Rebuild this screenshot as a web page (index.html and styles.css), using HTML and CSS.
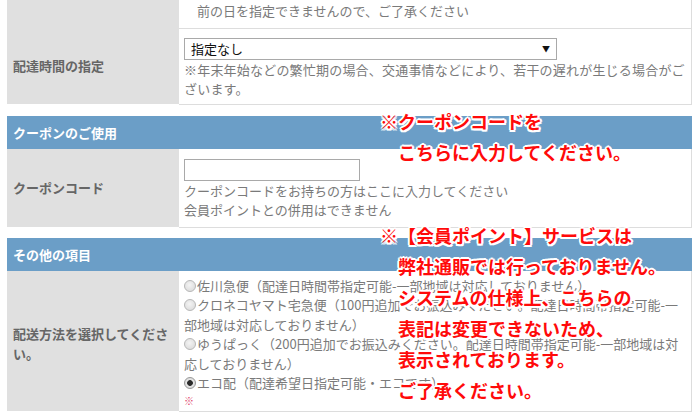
FILE: index.html
```html
<!DOCTYPE html>
<html lang="ja">
<head>
<meta charset="utf-8">
<link rel="stylesheet" href="styles.css">
</head>
<body>
<div class="page">
  <table class="form">
    <tr class="row-top">
      <th></th>
      <td><p class="indent">前の日を指定できませんので、ご了承ください</p></td>
    </tr>
    <tr class="row-time">
      <th>配達時間の指定</th>
      <td>
        <div class="select"><span>指定なし</span><span class="arrow">▼</span></div>
        <p class="wide">※年末年始などの繁忙期の場合、交通事情などにより、若干の遅れが生じる場合がご<br>ざいます。</p>
      </td>
    </tr>
  </table>

  <div class="sec-head">クーポンのご使用</div>
  <table class="form">
    <tr class="row-coupon">
      <th>クーポンコード</th>
      <td>
        <input class="coupon" type="text">
        <p>クーポンコードをお持ちの方はここに入力してください<br>会員ポイントとの併用はできません</p>
      </td>
    </tr>
  </table>

  <div class="sec-head sec-head-2">その他の項目</div>
  <table class="form">
    <tr class="row-ship">
      <th>配送方法を選択してくださ<br>い。</th>
      <td>
        <p><span class="radio"></span>佐川急便（配達日時間帯指定可能-一部地域は対応しておりません）<br><span class="radio"></span>クロネコヤマト宅急便（100円追加でお振込みください。配達日時間帯指定可能-一<br>部地域は対応しておりません）<br><span class="radio"></span>ゆうぱっく（200円追加でお振込みください。配達日時間帯指定可能-一部地域は対<br>応しておりません）<br><span class="radio checked"></span>エコ配（配達希望日指定可能・エコです）</p>
        <p class="req">※</p>
      </td>
    </tr>
  </table>

  <div class="annot annot-1">
    <span class="line">※クーポンコードを</span>
    <span class="line ind">こちらに入力してください。</span>
  </div>
  <div class="annot annot-2">
    <span class="line">※【会員ポイント】サービスは</span>
    <span class="line ind">弊社通販では行っておりません。</span>
    <span class="line ind">システムの仕様上、こちらの</span>
    <span class="line ind">表記は変更できないため、</span>
    <span class="line ind">表示されております。</span>
    <span class="line ind">ご了承ください。</span>
  </div>
</div>
</body>
</html>
```

FILE: styles.css
```css
body {
  margin: 0;
  background: #ffffff;
  font-family: "Noto Sans CJK JP", "Noto Sans", sans-serif;
  font-size: 13px;
  line-height: 19.5px;
  color: #7a7a7a;
}

p {
  margin: 0;
}

.page {
  position: relative;
  padding: 0 4px 0 7px;
}

.form {
  width: 100%;
  border-collapse: collapse;
  table-layout: fixed;
}

.form th {
  width: 172px;
  box-sizing: border-box;
  background: #e0e0e0;
  color: #666666;
  font-weight: bold;
  text-align: left;
  vertical-align: middle;
  padding: 0 6px;
}

.form td {
  background: #ffffff;
  border-bottom: 1px solid #dddddd;
  border-right: 1px solid #dddddd;
  padding: 0 4px 0 5px;
  vertical-align: top;
}

.row-top td {
  padding-top: 1px;
  padding-bottom: 7px;
}

.indent {
  padding-left: 13px;
}

.wide {
  letter-spacing: 0.2px;
}

.row-time td {
  padding-top: 9px;
  padding-bottom: 5px;
}

.select {
  display: flex;
  align-items: center;
  justify-content: space-between;
  width: 373px;
  height: 22px;
  box-sizing: border-box;
  border: 1px solid #a9a9a9;
  padding: 0 6px 0 6px;
  color: #111111;
  background: #ffffff;
}

.arrow {
  font-size: 8px;
  line-height: 8px;
  color: #111111;
}

.sec-head {
  margin-top: 11px;
  background: #6b9ec7;
  color: #ffffff;
  font-weight: bold;
  padding: 7px 6px;
  height: 33px;
  box-sizing: border-box;
}

.sec-head-2 {
  margin-top: 10px;
}

.row-coupon td {
  padding-top: 10px;
  padding-bottom: 7px;
}

.coupon {
  display: block;
  margin: 0;
  width: 176px;
  height: 22px;
  box-sizing: border-box;
  border: 1px solid #a9a9a9;
  background: #ffffff;
}

.row-ship th {
  padding-top: 6px;
}

.row-ship td {
  padding-top: 5px;
  padding-bottom: 3px;
}

.radio {
  display: inline-block;
  width: 12px;
  height: 12px;
  box-sizing: border-box;
  border-radius: 50%;
  border: 1px solid #b8b8b8;
  background: radial-gradient(circle at 45% 40%, #f4f4f4 0, #d6d6d6 100%);
  vertical-align: -1px;
  margin-right: 1px;
}

.radio.checked {
  border-color: #9a9a9a;
  background: radial-gradient(circle, #2a2a2a 0, #2a2a2a 2.5px, #e6e6e6 3.2px, #d0d0d0 100%);
}

.req {
  color: #e0456b;
  font-size: 10px;
  line-height: 15px;
}

.annot {
  position: absolute;
  left: 380px;
  color: #ff0a0a;
  font-weight: bold;
  font-size: 18px;
  line-height: 31px;
  white-space: nowrap;
  text-shadow:
    2px 0 0 #fff, -2px 0 0 #fff, 0 2px 0 #fff, 0 -2px 0 #fff,
    1.5px 1.5px 0 #fff, -1.5px 1.5px 0 #fff, 1.5px -1.5px 0 #fff, -1.5px -1.5px 0 #fff;
}

.annot .line {
  display: block;
}

.annot .ind {
  padding-left: 18px;
}

.annot-1 {
  top: 106px;
}

.annot-2 {
  top: 220px;
}
```
